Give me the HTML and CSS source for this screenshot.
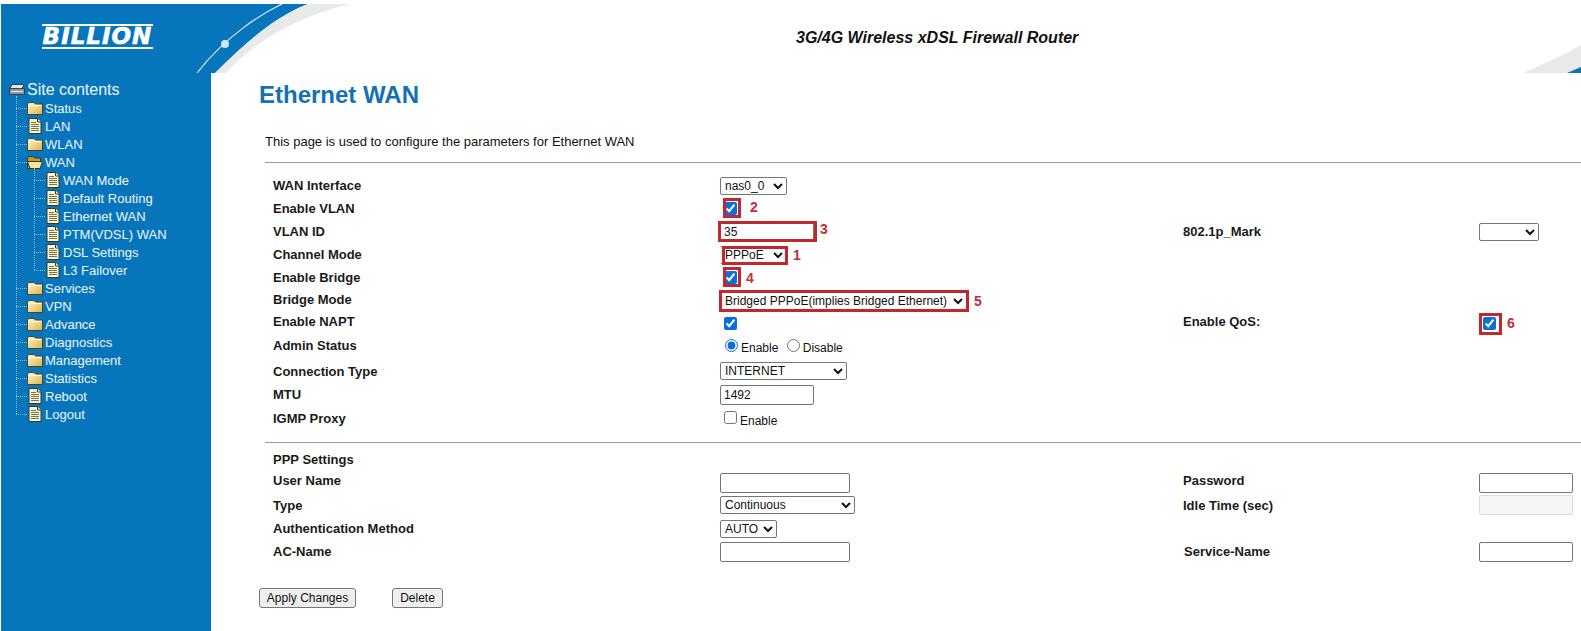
FILE: index.html
```html
<!DOCTYPE html>
<html lang="en">
<head>
  <meta charset="UTF-8" />
  <title>Ethernet WAN</title>
  <link rel="stylesheet" href="styles.css">
</head>
<body>

  <svg class="icon-defs" width="0" height="0">
    <defs>
      <linearGradient id="folderFill" x1="0" y1="0" x2="1" y2="1">
        <stop offset="0" stop-color="#fff8cc"/>
        <stop offset="1" stop-color="#dcb24a"/>
      </linearGradient>
      <symbol id="folder" viewBox="0 0 16 16">
        <path d="M0.5 4 L2 2.5 H7 L8.5 4 H15.5 V14.5 H0.5 Z" fill="url(#folderFill)" stroke="#4a4420" stroke-width="1"/>
        <path d="M1.5 5.5 H14.5" stroke="#fffbe0" stroke-width="1"/>
      </symbol>
      <symbol id="folder-open" viewBox="0 0 16 16">
        <path d="M0.5 4 L2 2.5 H6 L7.5 4 H13.5 V14.5 H0.5 Z" fill="#b99a3c" stroke="#3d3815" stroke-width="1"/>
        <path d="M0.5 7.5 H11 L15.5 8 L13 14.5 H3 Z" fill="#f6e79c" stroke="#3d3815" stroke-width="1"/>
      </symbol>
      <symbol id="page" viewBox="0 0 16 16">
        <path d="M2 0.5 H10.5 L14 4 V15.5 H2 Z" fill="#fbf7d6" stroke="#3b3a22" stroke-width="1"/>
        <path d="M10.5 0.5 V4 H14" fill="#fff" stroke="#3b3a22" stroke-width="1"/>
        <path d="M4 4.5 H9 M4 6.5 H12 M4 8.5 H12 M4 10.5 H12 M4 12.5 H12" stroke="#77744c" stroke-width="1"/>
      </symbol>
      <symbol id="drive" viewBox="0 0 16 12">
        <path d="M3 0.5 H15 L13 4.5 H1 Z" fill="#e4e7ea" stroke="#39424c" stroke-width="1"/>
        <path d="M0.5 4.5 H15.5 V10.5 H0.5 Z" fill="#8d949a" stroke="#39424c" stroke-width="1"/>
        <path d="M2 7.5 H14" stroke="#eef1f3" stroke-width="1"/>
      </symbol>
    </defs>
  </svg>

  <div class="header">
    <svg class="swoosh" width="1580" height="69" viewBox="0 0 1580 69">
      <path d="M196 69 C225 32 260 10 281 0" fill="none" stroke="#dcebf5" stroke-width="1.2"/>
      <circle cx="224" cy="40" r="4" fill="#d3e5f2"/>
      <path d="M210 69 H214 C245 38 275 12 307 0 H1580 V69 Z" fill="#fff"/>
      <path d="M214 69 C245 38 275 12 307 0 H349 C300 12 255 35 225 69 Z" fill="#e9e9e9"/>
      <path d="M1522 69 C1545 59 1565 50 1580 41 V69 Z" fill="#e9e9e9"/>
      <path d="M1566 69 L1580 63 V69 Z" fill="#0675bc"/>
    </svg>
    <div class="logo">BILLION</div>
    <div class="product">3G/4G Wireless xDSL Firewall Router</div>
  </div>

  <div class="layout">
    <div class="sidebar">
      <div class="tree-root">
        <svg class="root-icon"><use href="#drive"/></svg>
        <span>Site contents</span>
      </div>
      <ul class="tree">
        <li><div class="node"><svg class="icon"><use href="#folder"/></svg>Status</div></li>
        <li><div class="node"><svg class="icon"><use href="#page"/></svg>LAN</div></li>
        <li><div class="node"><svg class="icon"><use href="#folder"/></svg>WLAN</div></li>
        <li>
          <div class="node"><svg class="icon"><use href="#folder-open"/></svg>WAN</div>
          <ul class="tree sub">
            <li><div class="node"><svg class="icon"><use href="#page"/></svg>WAN Mode</div></li>
            <li><div class="node"><svg class="icon"><use href="#page"/></svg>Default Routing</div></li>
            <li><div class="node"><svg class="icon"><use href="#page"/></svg>Ethernet WAN</div></li>
            <li><div class="node"><svg class="icon"><use href="#page"/></svg>PTM(VDSL) WAN</div></li>
            <li><div class="node"><svg class="icon"><use href="#page"/></svg>DSL Settings</div></li>
            <li><div class="node"><svg class="icon"><use href="#page"/></svg>L3 Failover</div></li>
          </ul>
        </li>
        <li><div class="node"><svg class="icon"><use href="#folder"/></svg>Services</div></li>
        <li><div class="node"><svg class="icon"><use href="#folder"/></svg>VPN</div></li>
        <li><div class="node"><svg class="icon"><use href="#folder"/></svg>Advance</div></li>
        <li><div class="node"><svg class="icon"><use href="#folder"/></svg>Diagnostics</div></li>
        <li><div class="node"><svg class="icon"><use href="#folder"/></svg>Management</div></li>
        <li><div class="node"><svg class="icon"><use href="#folder"/></svg>Statistics</div></li>
        <li><div class="node"><svg class="icon"><use href="#page"/></svg>Reboot</div></li>
        <li><div class="node"><svg class="icon"><use href="#page"/></svg>Logout</div></li>
      </ul>
    </div>

    <div class="main">
      <h1>Ethernet WAN</h1>
      <p class="intro">This page is used to configure the parameters for Ethernet WAN</p>
      <hr class="rule rule-top">

      <table class="form">
        <tr class="h23">
          <th>WAN Interface</th>
          <td><select class="w67"><option>nas0_0</option></select></td>
          <th></th><td></td>
        </tr>
        <tr class="h23">
          <th>Enable VLAN</th>
          <td><div class="ctl">
            <span class="mark mark-check"><input type="checkbox" checked></span>
            <span class="num num-2">2</span>
          </div></td>
          <th></th><td></td>
        </tr>
        <tr class="h23">
          <th>VLAN ID</th>
          <td><div class="ctl">
            <span class="mark mark-input"><input type="text" class="w94" value="35"></span>
            <span class="num num-3">3</span>
          </div></td>
          <th>802.1p_Mark</th>
          <td><select class="w60"><option></option></select></td>
        </tr>
        <tr class="h23">
          <th>Channel Mode</th>
          <td><div class="ctl">
            <span class="mark mark-channel"><select class="w67"><option>PPPoE</option></select></span>
            <span class="num num-1">1</span>
          </div></td>
          <th></th><td></td>
        </tr>
        <tr class="h23">
          <th>Enable Bridge</th>
          <td><div class="ctl">
            <span class="mark mark-check"><input type="checkbox" checked></span>
            <span class="num num-4">4</span>
          </div></td>
          <th></th><td></td>
        </tr>
        <tr class="h23 lift">
          <th>Bridge Mode</th>
          <td><div class="ctl">
            <span class="mark mark-bridge"><select class="w247"><option>Bridged PPPoE(implies Bridged Ethernet)</option></select></span>
            <span class="num num-5">5</span>
          </div></td>
          <th></th><td></td>
        </tr>
        <tr class="h22 lift-more">
          <th>Enable NAPT</th>
          <td><input type="checkbox" checked></td>
          <th>Enable QoS:</th>
          <td><div class="ctl">
            <span class="mark mark-qos"><input type="checkbox" checked></span>
            <span class="num num-6">6</span>
          </div></td>
        </tr>
        <tr class="h24 lift">
          <th>Admin Status</th>
          <td class="choices">
            <input type="radio" name="admin" checked><label>Enable</label>
            <input type="radio" name="admin" class="second"><label>Disable</label>
          </td>
          <th></th><td></td>
        </tr>
        <tr class="h26">
          <th>Connection Type</th>
          <td><select class="w127"><option>INTERNET</option></select></td>
          <th></th><td></td>
        </tr>
        <tr class="h21">
          <th>MTU</th>
          <td><input type="text" class="w94" value="1492"></td>
          <th></th><td></td>
        </tr>
        <tr class="h26">
          <th>IGMP Proxy</th>
          <td class="choices"><input type="checkbox"><label>Enable</label></td>
          <th></th><td></td>
        </tr>
      </table>

      <hr class="rule rule-mid">

      <table class="form">
        <tr class="h19">
          <th>PPP Settings</th>
          <td></td><th></th><td></td>
        </tr>
        <tr class="h24 lift bottom">
          <th>User Name</th>
          <td><input type="text" class="w130"></td>
          <th>Password</th>
          <td><input type="password" class="w94"></td>
        </tr>
        <tr class="h24">
          <th>Type</th>
          <td><select class="w135"><option>Continuous</option></select></td>
          <th>Idle Time (sec)</th>
          <td><input type="text" class="w94" disabled></td>
        </tr>
        <tr class="h23">
          <th>Authentication Method</th>
          <td><select class="w57"><option>AUTO</option></select></td>
          <th></th><td></td>
        </tr>
        <tr class="h23">
          <th>AC-Name</th>
          <td><input type="text" class="w130"></td>
          <th class="shift">Service-Name</th>
          <td><input type="text" class="w94"></td>
        </tr>
      </table>

      <div class="actions">
        <button class="w97">Apply Changes</button>
        <button class="w51">Delete</button>
      </div>
    </div>
  </div>

</body>
</html>
```

FILE: styles.css
```css
html, body {
  margin: 0;
  padding: 0;
  height: 100%;
  overflow: hidden;
}

body {
  font-family: "Liberation Sans", Arial, sans-serif;
  background: #fff;
  color: #111;
  padding: 4px 0 0 1px;
  box-sizing: border-box;
}

.icon-defs {
  position: absolute;
}

/* header band */
.header {
  position: relative;
  height: 69px;
  background: #0675bc;
  display: flex;
}

.swoosh {
  position: absolute;
  left: 0;
  top: 0;
}

.logo {
  position: relative;
  flex: none;
  margin: 20px 0 0 41px;
  width: 111px;
  height: 21px;
  border-top: 2px solid #fff;
  border-bottom: 2px solid #fff;
  color: #fff;
  font-family: "DejaVu Sans", sans-serif;
  font-weight: bold;
  font-style: italic;
  font-size: 23px;
  line-height: 21px;
  letter-spacing: 1px;
  text-align: center;
  white-space: nowrap;
  -webkit-text-stroke: 0.6px #fff;
}

.product {
  position: relative;
  margin: 25px 0 0 643px;
  font-size: 16px;
  line-height: 18px;
  font-weight: bold;
  font-style: italic;
  color: #111;
  white-space: nowrap;
}

.layout {
  display: flex;
  height: calc(100vh - 73px);
}

/* left tree */
.sidebar {
  width: 210px;
  flex: none;
  background: #0675bc;
  color: #eef5fa;
  font-size: 13px;
  padding-top: 7px;
  box-sizing: border-box;
}

.tree-root {
  display: flex;
  align-items: center;
  height: 19px;
  padding-left: 8px;
  font-size: 16px;
}

.root-icon {
  width: 16px;
  height: 12px;
  margin-right: 2px;
}

.tree {
  position: relative;
  list-style: none;
  margin: 0 0 0 15px;
  padding: 0;
}

.tree::before {
  content: "";
  position: absolute;
  left: 0;
  top: -3px;
  bottom: 9px;
  border-left: 1px dotted #8fbcd9;
}

.tree li {
  position: relative;
  padding-left: 11px;
}

.tree li::before {
  content: "";
  position: absolute;
  left: 0;
  top: 9px;
  width: 11px;
  border-top: 1px dotted #8fbcd9;
}

.tree.sub {
  margin-left: 7px;
}

.node {
  display: flex;
  align-items: center;
  height: 18px;
  white-space: nowrap;
}

.icon {
  width: 16px;
  height: 16px;
  margin-right: 2px;
  flex: none;
}

/* main form */
.main {
  flex: 1;
  padding-left: 48px;
  min-width: 0;
}

h1 {
  margin: 10px 0 0;
  font-size: 24px;
  line-height: 24px;
  color: #1372b1;
}

.intro {
  margin: 28px 0 0 6px;
  font-size: 13px;
  line-height: 14px;
}

.rule {
  height: 0;
  border: 0;
  border-top: 1px solid #999;
  margin: 0 0 0 6px;
}

.rule-top {
  margin-top: 13px;
  margin-bottom: 11px;
}

.rule-mid {
  margin-top: 11px;
  margin-bottom: 7px;
}

.form {
  table-layout: fixed;
  width: 1316px;
  margin-left: 6px;
  border-collapse: collapse;
}

.form th,
.form td {
  padding: 0;
  vertical-align: middle;
  text-align: left;
}

.form th {
  font-size: 13px;
  font-weight: bold;
  color: #1a1a1a;
}

.form th:nth-child(1) {
  width: 447px;
  padding-left: 8px;
}

.form td:nth-child(2) {
  width: 463px;
}

.form th:nth-child(3) {
  width: 296px;
}

.form th.shift {
  padding-left: 1px;
  width: 295px;
}

.h19 { height: 19px; }
.h21 { height: 21px; }
.h22 { height: 22px; }
.h23 { height: 23px; }
.h24 { height: 24px; }
.h26 { height: 26px; }

.form .lift th { padding-bottom: 2px; }
.form .lift-more th { padding-bottom: 3px; }
.form .bottom td { vertical-align: bottom; }

select,
input[type="text"],
input[type="password"] {
  box-sizing: border-box;
  font-family: "Liberation Sans", Arial, sans-serif;
  font-size: 12px;
  color: #111;
  margin: 0;
  display: block;
  background-color: #fff;
  border: 1px solid #767676;
  border-radius: 2px;
}

select { height: 18px; }

input[type="text"],
input[type="password"] {
  height: 20px;
  padding: 1px 3px;
}

input:disabled {
  background-color: #f5f5f5 !important;
  border-color: #dcdcdc !important;
}

.w51 { width: 51px; }
.w57 { width: 57px; }
.w60 { width: 60px; }
.w67 { width: 67px; }
.w94 { width: 94px; }
.w97 { width: 97px; }
.w127 { width: 127px; }
.w130 { width: 130px; }
.w135 { width: 135px; }
.w247 { width: 247px; }

input[type="checkbox"],
input[type="radio"] {
  accent-color: #0a6fdc;
  vertical-align: middle;
}

.choices {
  font-size: 12px;
}

.choices label {
  vertical-align: -4px;
}

.choices input[type="radio"] {
  margin-top: 1px;
  margin-bottom: 0;
}

.choices .second {
  margin-left: 5px;
}

/* red annotation boxes */
.ctl {
  display: flex;
  align-items: center;
}

.mark {
  position: relative;
  display: block;
  flex: none;
}

.mark input[type="checkbox"] {
  display: block;
}

.mark::after {
  content: "";
  position: absolute;
  border: 3px solid #c1272d;
  pointer-events: none;
}

.mark-check::after { left: 3px; right: -1px; top: -1px; bottom: 0; }
.mark-input::after { left: -2px; right: -3px; top: -1px; bottom: 0; }
.mark-channel::after { left: 2px; right: -1px; top: 0; bottom: -1px; }
.mark-bridge::after { left: -1px; right: -2px; top: -2px; bottom: -2px; }
.mark-qos::after { left: 0; right: -3px; top: -1px; bottom: -2px; }

.mark-channel select {
  border-left-color: transparent;
}

.num {
  color: #c0303a;
  font-weight: bold;
  font-size: 14px;
  line-height: 14px;
}

.num-1 { margin-left: 6px; }
.num-2 { margin-left: 10px; margin-bottom: 3px; }
.num-3 { margin-left: 6px; margin-bottom: 6px; }
.num-4 { margin-left: 6px; }
.num-5 { margin-left: 7px; }
.num-6 { margin-left: 8px; }

.actions {
  display: flex;
  gap: 36px;
  margin-top: 25px;
}

button {
  box-sizing: border-box;
  height: 20px;
  padding: 0;
  font-family: "Liberation Sans", Arial, sans-serif;
  font-size: 12px;
  color: #111;
  background: #efefef;
  border: 1px solid #767676;
  border-radius: 3px;
}
```
